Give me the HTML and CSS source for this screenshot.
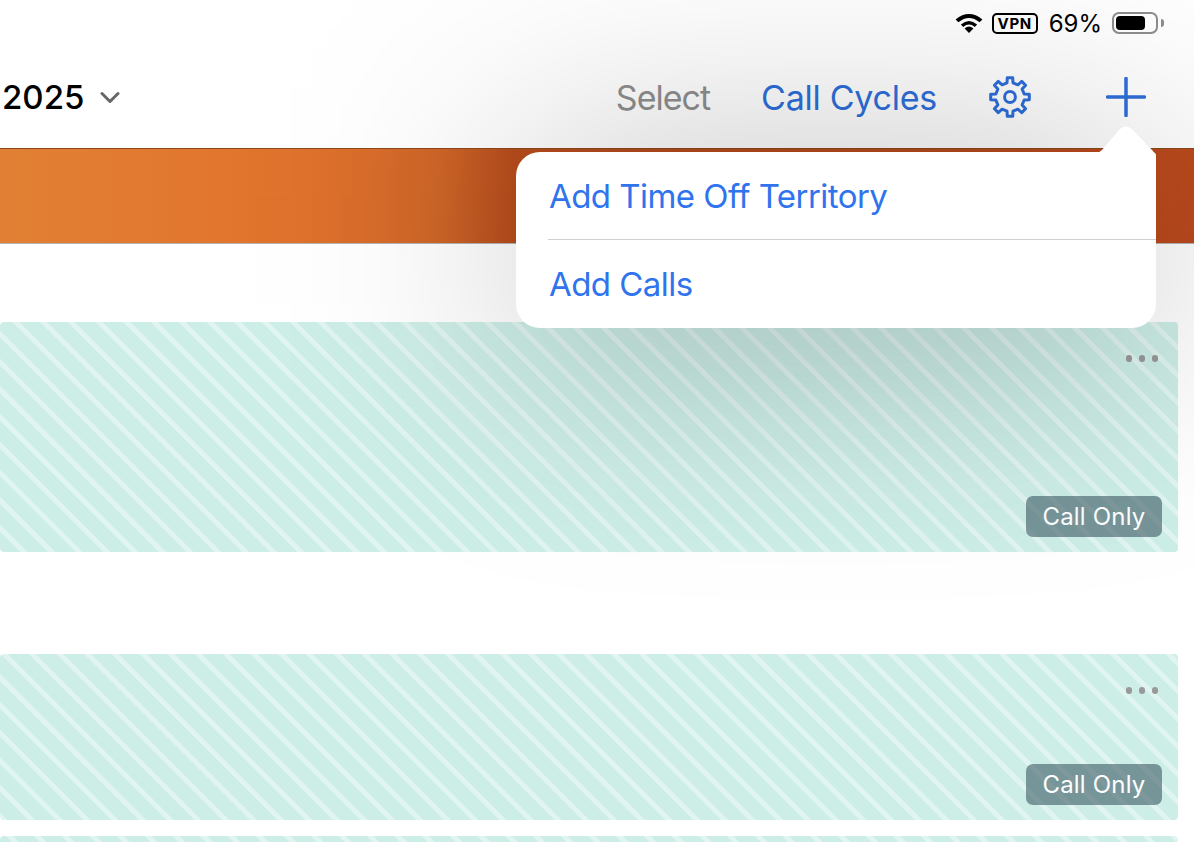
FILE: index.html
```html
<!DOCTYPE html>
<html lang="en">
<head>
<meta charset="utf-8">
<title>Calendar</title>
<link rel="stylesheet" href="styles.css">
</head>
<body>
<div class="page">
  <div class="status">
    <svg class="wifi" viewBox="0 0 28 20" aria-hidden="true">
      <path d="M14 20 L9.6 15.4 Q14 11.6 18.4 15.4Z"/>
      <path d="M5.9 11.6 Q14 4.6 22.1 11.6 L19.8 14 Q14 9.2 8.2 14Z"/>
      <path d="M0.6 6.4 Q14 -4.4 27.4 6.4 L24.6 9.3 Q14 0.6 3.4 9.3Z"/>
    </svg>
    <span class="vpn">VPN</span>
    <span class="pct">69%</span>
    <span class="battery"><span class="battery-fill"></span></span>
    <span class="battery-tip"></span>
  </div>
  <header class="toolbar">
    <span class="year">2025</span>
    <svg class="chevron" viewBox="0 0 20 13" aria-hidden="true"><path d="M2 2.5 L10 10.5 L18 2.5"/></svg>
    <span class="spacer"></span>
    <span class="select">Select</span>
    <span class="cycles">Call Cycles</span>
    <svg class="gear" viewBox="-22 -22 44 44" aria-hidden="true">
      <path d="M-3.01 -14.18 L-2.71 -19.31 L2.71 -19.31 L3.01 -14.18 L7.9 -12.16 L11.74 -15.57 L15.57 -11.74 L12.16 -7.9 L14.18 -3.01 L19.31 -2.71 L19.31 2.71 L14.18 3.01 L12.16 7.9 L15.57 11.74 L11.74 15.57 L7.9 12.16 L3.01 14.18 L2.71 19.31 L-2.71 19.31 L-3.01 14.18 L-7.9 12.16 L-11.74 15.57 L-15.57 11.74 L-12.16 7.9 L-14.18 3.01 L-19.31 2.71 L-19.31 -2.71 L-14.18 -3.01 L-12.16 -7.9 L-15.57 -11.74 L-11.74 -15.57 L-7.9 -12.16Z"/>
      <circle r="5.4"/>
    </svg>
    <svg class="plus" viewBox="0 0 40 40" aria-hidden="true"><path d="M20 1.5 V38.5 M1.5 20 H38.5"/></svg>
  </header>
  <div class="band"></div>
  <main class="list">
    <article class="card card-tall">
      <div class="dots"><i></i><i></i><i></i></div>
      <span class="badge">Call Only</span>
    </article>
    <article class="card card-short">
      <div class="dots"><i></i><i></i><i></i></div>
      <span class="badge">Call Only</span>
    </article>
    <article class="card card-last"></article>
  </main>
  <div class="pop-shade"></div>
  <div class="popover">
    <svg class="arrow" viewBox="0 0 60 34" aria-hidden="true">
      <path d="M0 27 Q3 27 6 24 L24 3 Q30 -2 36 3 L56 24 Q60 28 60 34 L0 34Z"/>
    </svg>
    <div class="pop-row">Add Time Off Territory</div>
    <div class="pop-row">Add Calls</div>
  </div>
</div>
</body>
</html>
```
FILE: styles.css
```css
* { box-sizing: border-box; }
html, body { margin: 0; height: 100%; overflow: hidden; background: #fff; }
body { font-family: Inter, "Liberation Sans", sans-serif; color: #000; }
.page { position: relative; width: 1194px; height: 842px; overflow: hidden; }

.status { height: 46px; display: flex; align-items: center; justify-content: flex-end; padding-right: 30px; }
.wifi { width: 28px; height: 20px; fill: #000; margin-right: 9px; }
.vpn { width: 46px; height: 21px; border: 2px solid #000; border-radius: 5px; font-size: 15px; font-weight: 700; letter-spacing: 0.6px; display: flex; align-items: center; justify-content: center; margin-right: 11px; }
.pct { font-size: 24px; margin-right: 10px; }
.battery { width: 46px; height: 22px; border: 2px solid #8e8e8e; border-radius: 7px; padding: 2px; display: flex; }
.battery-fill { width: 29px; background: #000; border-radius: 4px; }
.battery-tip { width: 3px; height: 8px; background: #8e8e8e; border-radius: 0 3px 3px 0; margin-left: 3px; }

.toolbar { height: 102px; display: flex; align-items: center; padding: 0 48px 0 2px; background: #fff; }
.year { font-size: 33px; font-weight: 500; }
.chevron { width: 20px; height: 13px; margin-left: 15.5px; fill: none; stroke: #666; stroke-width: 3; stroke-linecap: round; stroke-linejoin: round; }
.spacer { flex: 1; }
.select { font-size: 34px; letter-spacing: -1px; color: #8f8f8f; }
.cycles { font-size: 34px; letter-spacing: -0.25px; color: #2e6fdc; margin-left: 51px; }
.gear { width: 44px; height: 44px; margin-left: 51px; fill: none; stroke: #2e6fdc; stroke-width: 3; stroke-linejoin: round; }
.plus { width: 40px; height: 40px; margin-left: 74px; fill: none; stroke: #2e6fdc; stroke-width: 3.5; stroke-linecap: round; }

.band { height: 96px; border-top: 1px solid #8c4a1c; border-bottom: 1px solid #b5b5b5;
  background: linear-gradient(90deg, #e18034 0, #e2762e 220px, #df722c 300px, #d86c2b 380px, #cf6628 440px, #b94d1d 515px, #bc4a1d 100%); }

.list { padding: 78px 16px 0 0; display: flex; flex-direction: column; }
.card { --p: 0px; border-radius: 4px; display: flex; flex-direction: column; justify-content: space-between; align-items: flex-end; padding: 33px 16px 15px 0;
  background: repeating-linear-gradient(45deg, #cdeee7 var(--p), #cdeee7 calc(var(--p) + 14.2px), #e0f5f1 calc(var(--p) + 14.7px), #e0f5f1 calc(var(--p) + 19.2px), #cdeee7 calc(var(--p) + 19.6px)); }
.card-tall { height: 230px; }
.card-short { --p: 5.5px; height: 166px; margin-top: 102px; }
.card-last { --p: -7px; height: 60px; margin-top: 16px; }
.dots { display: flex; gap: 6.5px; margin-right: 4px; }
.dots i { width: 6.5px; height: 6.5px; border-radius: 50%; background: #999; }
.badge { width: 136px; height: 41px; border-radius: 7px; background: rgba(60, 90, 100, 0.6); color: #fff; font-size: 24px; letter-spacing: 0.2px; display: flex; align-items: center; justify-content: center; }

.pop-shade { position: absolute; left: 516px; top: 162px; width: 640px; height: 176px; background: rgba(0, 0, 0, 0.28); filter: blur(120px); }
.popover { position: absolute; left: 516px; top: 152px; width: 640px; height: 176px; background: #fff; border-radius: 24px; border-top-right-radius: 4px; color: #2f74ed; font-size: 33px; letter-spacing: -0.55px; display: flex; flex-direction: column; }
.arrow { position: absolute; left: 580px; top: -26px; width: 60px; height: 34px; fill: #fff; }
.pop-row { height: 88px; padding-left: 33px; display: flex; align-items: center; position: relative; }
.pop-row + .pop-row::before { content: ""; position: absolute; left: 32px; right: 0; top: -1px; height: 1px; background: #cfcfcf; }
```
